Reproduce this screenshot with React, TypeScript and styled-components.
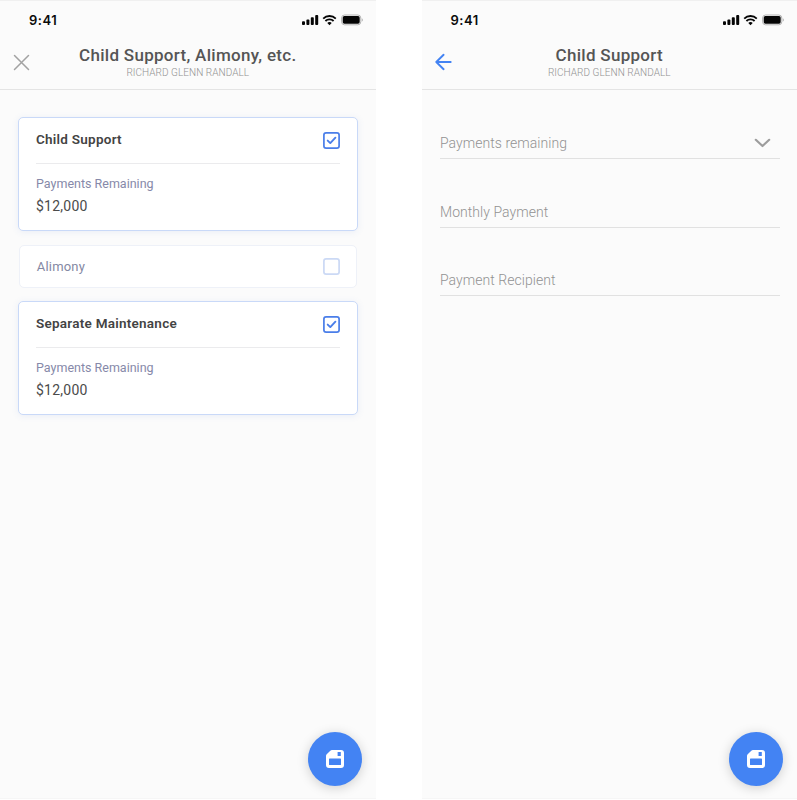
import React from "react";
import styled, { createGlobalStyle } from "styled-components";

const GlobalStyle = createGlobalStyle`
  * { box-sizing: border-box; }
  html, body { margin: 0; padding: 0; background: #ffffff; }
  body { font-family: Roboto, "Liberation Sans", sans-serif; overflow: hidden; }
  button { font: inherit; border: 0; padding: 0; margin: 0; background: none; }
`;

const Board = styled.main`
  display: flex;
  justify-content: space-between;
  width: 797px;
  height: 800px;
`;

const Phone = styled.section`
  position: relative;
  width: 375.5px;
  height: 799px;
  background: #fbfbfb;
  border-top: 1px solid #f0f0f0;
  border-bottom: 1px solid #f6f6f6;
`;

const StatusBar = styled.div`
  display: flex;
  align-items: center;
  justify-content: space-between;
  height: 38px;
  padding: 0 13px 0 29px;
`;

const Clock = styled.span`
  font-family: Inter, Roboto, sans-serif;
  font-size: 13px;
  font-weight: 600;
  line-height: 16px;
  letter-spacing: 0.5px;
  color: #0b0b0b;
`;

const Header = styled.header`
  display: grid;
  grid-template-columns: 43px 1fr 43px;
  height: 51px;
  border-bottom: 1px solid #e4e4e4;
`;

const NavButton = styled.button<{ $top: number }>`
  display: flex;
  align-items: flex-start;
  padding: ${(p) => p.$top}px 0 0 13px;
`;

const Heading = styled.div`
  display: flex;
  flex-direction: column;
  align-items: center;
  padding-top: 6px;
  white-space: nowrap;
`;

const Title = styled.h1`
  margin: 0;
  font-size: 17px;
  font-weight: 500;
  line-height: 21px;
  letter-spacing: 0.3px;
  color: #555555;
`;

const Subtitle = styled.div`
  margin-top: 1px;
  font-size: 10px;
  font-weight: 300;
  line-height: 12px;
  letter-spacing: 0.05px;
  color: #929292;
`;

const CardList = styled.div`
  display: flex;
  flex-direction: column;
  align-items: center;
  gap: 13.7px;
  padding: 27px 18px 0;
`;

const Card = styled.article`
  width: 100%;
  height: 114px;
  padding: 0 17px;
  background: #ffffff;
  border: 1px solid #c9d9f8;
  border-radius: 5px;
  box-shadow: 0 1px 7px rgba(90, 130, 210, 0.11);
`;

const CompactCard = styled.article`
  width: 338px;
  height: 43px;
  padding: 0 16px 0 17px;
  background: #ffffff;
  border: 1px solid #eef1f8;
  border-radius: 5px;
`;

const CardTop = styled.div<{ $divided?: boolean }>`
  display: flex;
  align-items: center;
  justify-content: space-between;
  height: ${(p) => (p.$divided ? 46 : 41)}px;
  padding-bottom: ${(p) => (p.$divided ? 1 : 0)}px;
  border-bottom: ${(p) => (p.$divided ? "1px solid #ebebed" : "0")};
`;

const CardName = styled.h2`
  margin: 0;
  padding-bottom: 3px;
  font-size: 13.5px;
  font-weight: 600;
  line-height: 18px;
  letter-spacing: 0.25px;
  color: #434343;
`;

const MutedName = styled.h2`
  margin: 0;
  padding-top: 1px;
  font-size: 13px;
  font-weight: 400;
  line-height: 18px;
  letter-spacing: 0.2px;
  color: #8488a3;
`;

const FieldName = styled.div`
  margin-top: 10.5px;
  font-size: 12.5px;
  line-height: 18px;
  letter-spacing: 0;
  color: #8689a9;
`;

const Amount = styled.div`
  margin-top: 4px;
  font-size: 14px;
  line-height: 18px;
  letter-spacing: 0.25px;
  color: #4b4b4b;
`;

const Form = styled.form`
  display: flex;
  flex-direction: column;
  padding: 34px 17.5px 0 18.5px;
`;

const FormField = styled.div<{ $height: number }>`
  display: flex;
  align-items: flex-end;
  justify-content: space-between;
  height: ${(p) => p.$height}px;
  padding: 0 9px 5px 0;
  border-bottom: 1px solid #e1e1e1;
`;

const Placeholder = styled.span`
  font-size: 14px;
  font-weight: 300;
  line-height: 20px;
  letter-spacing: 0.05px;
  color: #929292;
`;

const SaveButton = styled.button`
  position: absolute;
  right: 14px;
  bottom: 12px;
  display: flex;
  align-items: center;
  justify-content: center;
  width: 54px;
  height: 54px;
  border-radius: 50%;
  background: #4383f3;
  box-shadow: 0 2px 12px rgba(0, 0, 0, 0.18);
`;

const StatusIcons = () => (
  <svg width="61" height="12" viewBox="0 0 61 12" aria-hidden="true">
    <g fill="#050505">
      <rect x="0" y="7.3" width="3" height="3.7" rx="0.9" />
      <rect x="4.4" y="5.5" width="3" height="5.5" rx="0.9" />
      <rect x="8.8" y="3.2" width="3" height="7.8" rx="0.9" />
      <rect x="13.2" y="1.1" width="3" height="9.9" rx="0.9" />
      <path d="M27.5 8.1q1.3 0 2.2.8L27.5 11.3 25.3 8.9q.9-.8 2.2-.8z" />
    </g>
    <g fill="none" stroke="#050505" strokeWidth="1.8">
      <path d="M21.2 4.6c3.5-3.5 9.1-3.5 12.6 0" />
      <path d="M23.4 7c2.3-2.3 5.9-2.3 8.2 0" />
    </g>
    <rect x="39.6" y="1" width="19.2" height="9.8" rx="3" fill="none" stroke="#b4b4b4" />
    <rect x="40.7" y="2.1" width="17" height="7.6" rx="1.7" fill="#050505" />
    <path d="M59.8 4.2q1.1.5 1.1 1.7t-1.1 1.7z" fill="#b4b4b4" />
  </svg>
);

const CloseIcon = () => (
  <svg width="17" height="17" viewBox="0 0 17 17" aria-hidden="true">
    <path d="M1.5 1.5l14 14M15.5 1.5l-14 14" stroke="#a2a2a2" strokeWidth="1.5" strokeLinecap="round" />
  </svg>
);

const BackIcon = () => (
  <svg width="18" height="18" viewBox="0 0 18 18" aria-hidden="true">
    <path
      d="M15.7 9H1.4M8.6 1.8L1.3 9l7.3 7.2"
      fill="none"
      stroke="#4383f3"
      strokeWidth="1.9"
      strokeLinecap="round"
      strokeLinejoin="round"
    />
  </svg>
);

const Checkbox = ({ checked = false }: { checked?: boolean }) => (
  <svg width="17" height="17" viewBox="0 0 17 17" role="checkbox" aria-checked={checked}>
    <rect
      x="0.9"
      y="0.9"
      width="15.2"
      height="15.2"
      rx="2.2"
      fill="#ffffff"
      stroke={checked ? "#4a7ee9" : "#cbd9f5"}
      strokeWidth="1.7"
    />
    {checked && (
      <path
        d="M4.7 8.6l2.6 2.5 5.1-5.4"
        fill="none"
        stroke="#4a7ee9"
        strokeWidth="1.9"
        strokeLinecap="round"
        strokeLinejoin="round"
      />
    )}
  </svg>
);

const ChevronIcon = () => (
  <svg width="17" height="20" viewBox="0 0 17 20" aria-hidden="true">
    <path
      d="M1.8 6.8l6.7 6.2 6.7-6.2"
      fill="none"
      stroke="#9d9d9d"
      strokeWidth="2.2"
      strokeLinecap="round"
      strokeLinejoin="round"
    />
  </svg>
);

const SaveIcon = () => (
  <svg width="20" height="20" viewBox="0 0 20 20" aria-hidden="true">
    <path
      fill="#ffffff"
      fillRule="evenodd"
      d="M7 1H16q3 0 3 3v12q0 3-3 3H4q-3 0-3-3V7Q1 6 1.7 5.3L5.3 1.7Q6 1 7 1zM12.6 3v4h3.2V3zM4.6 9.6q-.6 0-.6.6v5.2q0 .6.6.6h10.8q.6 0 .6-.6v-5.2q0-.6-.6-.6z"
    />
  </svg>
);

interface ScreenProps {
  title: string;
  back?: boolean;
  children: React.ReactNode;
}

const Screen = ({ title, back, children }: ScreenProps) => (
  <Phone>
    <StatusBar>
      <Clock>9:41</Clock>
      <StatusIcons />
    </StatusBar>
    <Header>
      <NavButton $top={back ? 14 : 15} aria-label={back ? "Back" : "Close"}>
        {back ? <BackIcon /> : <CloseIcon />}
      </NavButton>
      <Heading>
        <Title>{title}</Title>
        <Subtitle>RICHARD GLENN RANDALL</Subtitle>
      </Heading>
    </Header>
    {children}
    <SaveButton aria-label="Save">
      <SaveIcon />
    </SaveButton>
  </Phone>
);

const ObligationCard = ({ name }: { name: string }) => (
  <Card>
    <CardTop $divided>
      <CardName>{name}</CardName>
      <Checkbox checked />
    </CardTop>
    <FieldName>Payments Remaining</FieldName>
    <Amount>$12,000</Amount>
  </Card>
);

export default function App() {
  return (
    <>
      <GlobalStyle />
      <Board>
        <Screen title="Child Support, Alimony, etc.">
          <CardList>
            <ObligationCard name="Child Support" />
            <CompactCard>
              <CardTop>
                <MutedName>Alimony</MutedName>
                <Checkbox />
              </CardTop>
            </CompactCard>
            <ObligationCard name="Separate Maintenance" />
          </CardList>
        </Screen>
        <Screen title="Child Support" back>
          <Form>
            <FormField $height={35}>
              <Placeholder>Payments remaining</Placeholder>
              <ChevronIcon />
            </FormField>
            <FormField $height={69}>
              <Placeholder>Monthly Payment</Placeholder>
            </FormField>
            <FormField $height={68}>
              <Placeholder>Payment Recipient</Placeholder>
            </FormField>
          </Form>
        </Screen>
      </Board>
    </>
  );
}
